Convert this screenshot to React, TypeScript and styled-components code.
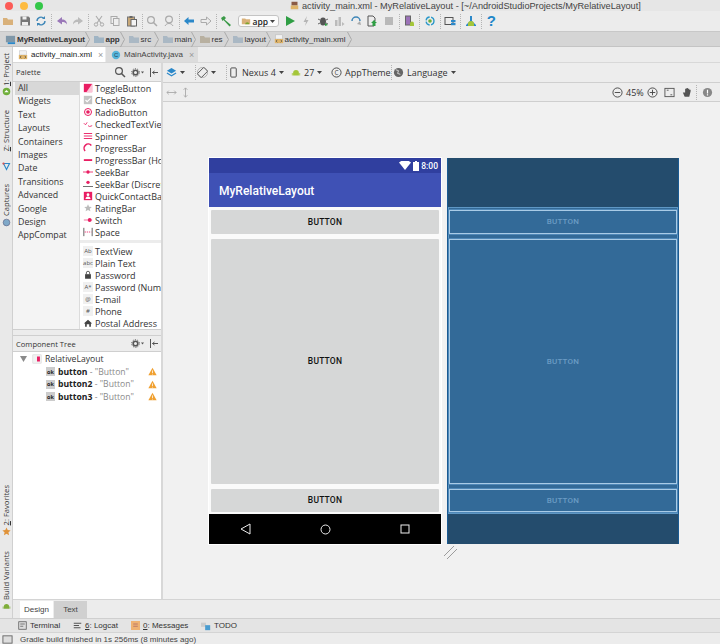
import React from "react";
import styled, { createGlobalStyle } from "styled-components";

const Global = createGlobalStyle`
  html, body { margin: 0; padding: 0; background: #ececec; }
  * { box-sizing: border-box; }
`;

const Root = styled.div`
  width: 720px; height: 644px; overflow: hidden; display: flex; flex-direction: column;
  background: #ececec; color: #222; font-family: "Open Sans", "Liberation Sans", sans-serif; font-size: 9px;
`;
const TitleBar = styled.div`
  height: 11px; flex: none; display: flex; align-items: center; position: relative;
  background: #e6e6e6; padding-left: 5px; gap: 7px;
`;
const Light = styled.span<{ $c: string }>`
  width: 8px; height: 8px; border-radius: 50%; background: ${p => p.$c}; flex: none;
`;
const TitleText = styled.div`
  margin-left: 240px; display: flex; align-items: center; gap: 3px; color: #444; white-space: nowrap;
  font-family: "Liberation Sans", sans-serif; font-size: 9.2px;
`;
const Toolbar = styled.div`
  height: 21px; flex: none; display: flex; align-items: center; background: #ececec; border-bottom: 1px solid #c8c8c8;
`;
const Slot = styled.span`
  width: 16.5px; height: 16px; flex: none; display: flex; align-items: center; justify-content: center;
`;
const Sep = styled.span`
  width: 1px; height: 15px; flex: none; margin: 0 1.5px; border-left: 1px dotted #b4b4b4;
`;
const AppBox = styled.div`
  width: 41px; height: 12px; flex: none; margin: 0 3px; border: 1px solid #c4c4c4; border-radius: 3px; background: #fcfcfc;
  display: flex; align-items: center; gap: 2px; padding-left: 2px; font-size: 8.5px; font-weight: 600;
`;
const Crumbs = styled.div`
  height: 15px; flex: none; display: flex; align-items: center; background: #d5d5d5; padding-left: 5px; border-bottom: 1px solid #c4c4c4;
  color: #333; font-family: "Liberation Sans", sans-serif; font-size: 8px;
`;
const Crumb = styled.span<{ $w: number; $bold?: boolean }>`
  width: ${p => p.$w}px; flex: none; display: flex; align-items: center; gap: 1px; white-space: nowrap;
  font-weight: ${p => (p.$bold ? 700 : 400)};
`;
const Middle = styled.div`
  flex: 1; min-height: 0; display: flex;
`;
const Side = styled.div`
  width: 13px; flex: none; display: flex; flex-direction: column; justify-content: space-between; align-items: center;
  background: #e9e9e9; padding: 6px 0 7px; border-right: 1px solid #d0d0d0;
`;
const SideGroup = styled.div`
  display: flex; flex-direction: column; align-items: center;
`;
const SideLabel = styled.span<{ $top?: number }>`
  writing-mode: vertical-rl; transform: rotate(180deg); font-size: 7.6px; color: #333; white-space: nowrap;
  line-height: 12px; margin-top: ${p => p.$top ?? 0}px;
  u { text-decoration: underline; }
`;
const SideIcon = styled.span<{ $top?: number }>`
  margin-top: ${p => p.$top ?? 1}px; height: 10px; display: flex; align-items: center; justify-content: center;
`;
const MainCol = styled.div`
  flex: 1; min-width: 0; display: flex; flex-direction: column;
`;
const Tabs = styled.div`
  height: 16px; flex: none; display: flex; background: #ececec; border-bottom: 1px solid #d8d8d8;
`;
const FileTab = styled.div<{ $active?: boolean }>`
  width: 92px; margin-right: 1px; flex: none; display: flex; align-items: center; gap: 3px; padding-left: 5px;
  font-family: "Liberation Sans", sans-serif; font-size: 8px; white-space: nowrap;
  background: ${p => (p.$active ? "#fff" : "#dcdcdc")}; color: ${p => (p.$active ? "#222" : "#444")};
`;
const TabClose = styled.span`
  color: #999; font-size: 9px; margin-left: 3px;
`;
const Work = styled.div`
  flex: 1; min-height: 0; display: flex;
`;
const LeftPanel = styled.div`
  width: 150px; flex: none; display: flex; flex-direction: column; background: #fff; border-right: 2px solid #d8d8d8;
`;
const PanelHead = styled.div<{ $h: number }>`
  height: ${p => p.$h}px; flex: none; display: flex; align-items: center; justify-content: space-between; padding: 0 3px;
  background: #ededed; border-bottom: 1px solid #cfcfcf; font-size: 7.6px; color: #333;
`;
const HeadIcons = styled.div`
  display: flex; align-items: center; gap: 5px;
`;
const PaletteBody = styled.div`
  height: 247px; flex: none; display: flex;
`;
const Cats = styled.div`
  width: 67px; flex: none; padding: 0 0 0 2px; background: #f4f4f4; border-right: 1px solid #dcdcdc;
`;
const Cat = styled.div<{ $active?: boolean }>`
  height: 13.4px; line-height: 13.4px; padding-left: 3px; font-size: 8.8px; color: #333;
  background: ${p => (p.$active ? "#d8d8d8" : "transparent")};
`;
const Items = styled.div`
  flex: 1; min-width: 0; overflow: hidden;
`;
const Item = styled.div`
  height: 12px; display: flex; align-items: center; gap: 2px; padding-left: 3px; font-size: 9px; white-space: nowrap; color: #333;
`;
const ItemDivider = styled.div`
  height: 3px; margin: 2px 0 2px; background: #ececec;
`;
const Splitter = styled.div`
  height: 7px; flex: none; background: #ececec; border-top: 1px solid #cfcfcf; border-bottom: 1px solid #cfcfcf;
`;
const Tree = styled.div`
  flex: 1; padding-top: 1px; background: #fff;
`;
const TreeRow = styled.div<{ $indent: number }>`
  height: 12.5px; display: flex; align-items: center; gap: 3px; padding-left: ${p => p.$indent}px; padding-right: 4px; font-size: 8.6px; white-space: nowrap; color: #333;
`;
const BoldName = styled.b`
  color: #222; font-weight: 700;
`;
const Muted = styled.span`
  color: #8a8a8a;
`;
const Warn = styled.span`
  margin-left: auto; display: flex;
`;
const Editor = styled.div`
  flex: 1; min-width: 0; display: flex; flex-direction: column; background: #f1f1f1;
`;
const EdRow = styled.div<{ $h: number }>`
  height: ${p => p.$h}px; flex: none; display: flex; align-items: center; padding-left: 3px; background: #ededed; border-bottom: 1px solid #cfcfcf;
  font-size: 9px; color: #333;
`;
const EdGroup = styled.div<{ $w: number }>`
  width: ${p => p.$w}px; flex: none; display: flex; align-items: center; gap: 3px; white-space: nowrap;
`;
const Spacer = styled.span`
  flex: 1;
`;
const Nudge = styled.span`
  margin-left: 3px; display: flex;
`;
const Canvas = styled.div`
  flex: 1; min-height: 0; position: relative; display: flex; align-items: flex-start; gap: 6px; padding: 56px 0 0 46px;
`;
const Phone = styled.div`
  width: 232px; height: 386px; flex: none; display: flex; flex-direction: column; background: #fafafa;
  box-shadow: 0 0 0 1px #fff;
`;
const StatusBarP = styled.div`
  height: 15px; flex: none; background: #303f9f; color: #fff; display: flex; align-items: center; justify-content: flex-end; gap: 2px; padding-right: 3px;
  font: 500 8.5px Roboto, sans-serif;
`;
const AppBar = styled.div`
  height: 34px; flex: none; background: #3f51b5; color: #fff; display: flex; align-items: center; padding: 1px 0 0 10px;
  font: 500 12px Roboto, sans-serif;
`;
const PhoneBody = styled.div`
  flex: 1; display: flex; flex-direction: column; padding: 3px 2px 2px; gap: 5px;
`;
const PBtn = styled.div<{ $grow?: boolean }>`
  height: ${p => (p.$grow ? "auto" : "23.5px")}; flex: ${p => (p.$grow ? 1 : "none")}; background: #d6d7d7; border-radius: 1px;
  display: flex; align-items: center; justify-content: center; color: #111; font: 500 8.5px Roboto, sans-serif; letter-spacing: .2px;
`;
const NavBar = styled.div`
  height: 30px; flex: none; background: #000; display: flex; align-items: center; justify-content: space-between; padding: 0 31px;
`;
const Blue = styled.div`
  width: 232px; height: 386px; flex: none; display: flex; flex-direction: column; background: #244c6d;
  border-left: 1px solid #1a5a92; border-right: 1px solid #1a5a92;
`;
const BlueTop = styled.div<{ $h: number }>`
  height: ${p => p.$h}px; flex: none;
`;
const BlueBody = styled.div`
  flex: 1; background: #336a98; box-shadow: inset 0 0 0 1px #5f97c4; display: flex; flex-direction: column; padding: 3px 1px 2px; gap: 5px; min-height: 0;
`;
const BBtn = styled.div<{ $grow?: boolean }>`
  height: ${p => (p.$grow ? "auto" : "23.5px")}; flex: ${p => (p.$grow ? 1 : "none")};
  border: 1px solid #a9cbe6; box-shadow: 0 0 0 1px #4f88b8; display: flex; align-items: center; justify-content: center; color: #6b9cc4;
  font: 500 8px Roboto, sans-serif; letter-spacing: .2px;
`;
const Handle = styled.span`
  position: absolute; left: 281px; top: 444px; display: flex;
`;
const DesignTabs = styled.div`
  height: 19px; flex: none; display: flex; align-items: flex-end; padding-left: 7px; background: #ececec; border-top: 1px solid #d4d4d4; gap: 1px;
`;
const DTab = styled.div<{ $active?: boolean }>`
  width: 33px; height: 17px; display: flex; align-items: center; justify-content: center; font-family: "Liberation Sans", sans-serif; font-size: 8px; color: #444;
  background: ${p => (p.$active ? "#fff" : "#d0d0d0")};
`;
const BottomTools = styled.div`
  height: 14px; flex: none; display: flex; align-items: center; padding-left: 18px; background: #e4e4e4; border-top: 1px solid #cfcfcf;
  font-family: "Liberation Sans", sans-serif; font-size: 8px; color: #333;
`;
const Tool = styled.span<{ $w: number }>`
  width: ${p => p.$w}px; flex: none; display: flex; align-items: center; gap: 3px; white-space: nowrap;
`;
const StatusLine = styled.div`
  height: 12px; flex: none; display: flex; align-items: center; gap: 7px; padding: 1px 0 0 2px; background: #ececec; border-top: 1px solid #d4d4d4;
  font-family: "Liberation Sans", sans-serif; font-size: 8px; color: #444; white-space: nowrap;
`;
const HelpMark = styled.span`
  color: #1e87c9; font: 700 15px/14px "Liberation Sans", sans-serif;
`;
const BoxTag = styled.span`
  width: 10px; height: 10px; flex: none; background: #f0f0f0; color: #555; font-size: 6px; display: flex; align-items: center; justify-content: center;
`;
const OkTag = styled.span`
  width: 9px; height: 9px; flex: none; background: #ccc; color: #222; font-size: 5.5px; font-weight: 700; display: flex; align-items: center; justify-content: center;
`;
const Svg = styled.svg<{ $mr?: number }>`
  flex: none; display: block; margin-right: ${p => p.$mr ?? 0}px;
`;

type SP = { s?: number; children: React.ReactNode };
const G = ({ s = 12, children }: SP) => (
  <Svg width={s} height={s} viewBox="0 0 12 12">{children}</Svg>
);

const Folder = ({ c = "#d9b17a" }: { c?: string }) => <G><path d="M1 3h4l1 1.500h5V10H1z" fill={c} /></G>;
const Save = () => <G><path d="M1.500 1.500h8l1.500 1.500v7.500h-9.500z" fill="#777" /><rect x="3.500" y="1.500" width="4" height="3" fill="#eee" /><rect x="3" y="7" width="6" height="3.500" fill="#eee" /></G>;
const Sync = ({ c = "#3f87b8" }: { c?: string }) => <G><path d="M2 6a4 4 0 0 1 7-2.500M10 6a4 4 0 0 1-7 2.500" fill="none" stroke={c} strokeWidth="1.400" /><path d="M10 1v3H7zM2 11V8h3z" fill={c} /></G>;
const Undo = ({ c }: { c: string }) => <G><path d="M1 6l5-4v2.500c3 0 5 1.500 5 5-1-2-3-2.500-5-2.500V9.500z" fill={c} /></G>;
const Redo = ({ c }: { c: string }) => <G><path d="M11 6L6 2v2.500c-3 0-5 1.500-5 5 1-2 3-2.500 5-2.500V9.500z" fill={c} /></G>;
const Cut = () => <G><path d="M3 1l5 7M9 1L4 8" stroke="#aaa" strokeWidth="1.100" fill="none" /><circle cx="3" cy="9.500" r="1.700" fill="none" stroke="#aaa" /><circle cx="9" cy="9.500" r="1.700" fill="none" stroke="#aaa" /></G>;
const Copy = () => <G><rect x="2" y="1.500" width="6" height="7" fill="#eee" stroke="#aaa" /><rect x="4.500" y="3.500" width="5.500" height="7" fill="#eee" stroke="#aaa" /></G>;
const Paste = () => <G><rect x="1.500" y="2" width="7" height="9" fill="#c8a878" stroke="#777" /><rect x="5" y="4.500" width="5.500" height="6.500" fill="#f4f4f4" stroke="#666" /><rect x="3.500" y="1" width="3" height="2" fill="#666" /></G>;
const Search = ({ c = "#aaa" }: { c?: string }) => <G><circle cx="5" cy="5" r="3.400" fill="none" stroke={c} strokeWidth="1.200" /><path d="M7.500 7.500L11 11" stroke={c} strokeWidth="1.500" /></G>;
const Replace = () => <G><circle cx="6" cy="4.500" r="3.400" fill="none" stroke="#aaa" strokeWidth="1.200" /><path d="M2 11c1-2 2.500-2.500 4-2.500S9 9 10 11" fill="none" stroke="#aaa" /></G>;
const ArrL = ({ c }: { c: string }) => <G><path d="M1 6l4.500-4v2.500H11v3H5.500V10z" fill={c} /></G>;
const ArrR = ({ c }: { c: string }) => <G><path d="M11 6L6.500 2v2.500H1v3h5.500V10z" fill="none" stroke={c} /></G>;
const Hammer = () => <G><path d="M1 3l3-2 2 2-1.500 1.500L11 10l-1.500 1.500L3.500 5 2.500 6z" fill="#3b9a48" /></G>;
const Droid = ({ c = "#a4c639" }: { c?: string }) => <><path d="M2.500 6a3.500 3.500 0 0 1 7 0v3h-7z" fill={c} /><rect x="1" y="6" width="1" height="3" fill={c} /><rect x="10" y="6" width="1" height="3" fill={c} /></>;
const Run = () => <G><path d="M2 1l9 5-9 5z" fill="#2f9e44" /></G>;
const Bolt = () => <G><path d="M7 1L3.500 7H6l-1 4 3.500-6H6z" fill="#b5b5b5" /></G>;
const Bug = () => <G><ellipse cx="6" cy="6.500" rx="3" ry="4" fill="#555" /><path d="M1 4l2 1M11 4L9 5M1 9l2-1M11 9L9 8" stroke="#666" /><path d="M8 8l3 2-3 1z" fill="#2f9e44" /></G>;
const Prof = () => <G><rect x="2" y="5" width="2.500" height="6" fill="#bbb" /><rect x="5.500" y="2" width="2.500" height="9" fill="#bbb" /><path d="M9 7l2.500 2-2.500 2z" fill="#bbb" /></G>;
const Apply = () => <G><path d="M2 6a4 4 0 0 1 8 0" fill="none" stroke="#3f87b8" strokeWidth="1.500" /><path d="M7 9l3-3 1 4z" fill="#aaa" /></G>;
const Attach = () => <G><path d="M2 1h5l2 2v3H8v5H2z" fill="none" stroke="#555" /><path d="M8 5l3 3H9.500v3h-3V8H5z" fill="#2f9e44" /></G>;
const Stop = () => <G><rect x="2" y="2" width="8" height="8" fill="#b9b9b9" /></G>;
const Avd = () => <G><rect x="2.500" y="1" width="5" height="9" fill="#9b72b8" stroke="#666" /><path d="M7 8.500a2 2 0 0 1 4 0V11H7z" fill="#a4c639" /></G>;
const SyncG = () => <G><circle cx="6" cy="6" r="4" fill="none" stroke="#2b98c9" strokeWidth="1.300" strokeDasharray="5 1.500" /><circle cx="6" cy="6" r="1.800" fill="#6fae3a" /></G>;
const Struct = () => <G><rect x="1" y="2.500" width="8" height="7" fill="none" stroke="#555" /><rect x="7" y="5" width="4.500" height="2.200" fill="#2b88c9" /><rect x="7" y="8" width="4.500" height="2.200" fill="#2b88c9" /></G>;
const Sdk = () => <G><path d="M5 1h2v5l4 4v1H1v-1l4-4z" fill="#2b88c9" /><path d="M3 9a3 3 0 0 1 6 0v2H3z" fill="#a4c639" /></G>;
const Caret = ({ c = "#444" }: { c?: string }) => <Svg width="5" height="3" viewBox="0 0 5 3"><path d="M0 0h5L2.500 3z" fill={c} /></Svg>;
const Chevron = () => <Svg $mr={3} width="5" height="15" viewBox="0 0 5 15"><path d="M.5 0l4 7.500-4 7.500" fill="none" stroke="#aaa" /></Svg>;
const XmlIcon = () => <G s={10}><rect x="2" y="1" width="8" height="5" fill="#f2f2f2" stroke="#bbb" strokeWidth=".6" /><rect x="1" y="6" width="10" height="5" fill="#e0b468" /><path d="M4 7l-1.500 1.500L4 10M8 7l1.500 1.500L8 10" stroke="#444" fill="none" strokeWidth=".8" /></G>;
const Gear = () => <Svg width="13" height="9" viewBox="0 0 13 9"><circle cx="4.500" cy="4.500" r="2.300" fill="none" stroke="#555" strokeWidth="1.600" /><circle cx="4.500" cy="4.500" r="3.800" fill="none" stroke="#555" strokeWidth="1" strokeDasharray="1.200 1.200" /><path d="M10 3.500h3L11.500 5.500z" fill="#555" /></Svg>;
const Pin = () => <Svg width="9" height="9" viewBox="0 0 9 9"><path d="M1.500 0v9M3.500 4.500H9M3.500 4.500L5.500 3M3.500 4.500L5.500 6" stroke="#555" fill="none" /></Svg>;

const pal: Record<string, React.ReactNode> = {
  toggle: <><rect x="1" y="1" width="10" height="10" fill="#e91e63" /><path d="M11 1v10H4z" fill="#fbc4d6" /></>,
  check: <><rect x="1" y="1" width="10" height="10" fill="#c4c4c4" /><path d="M3 6l2 2 4-4" stroke="#fff" fill="none" strokeWidth="1.300" /></>,
  radio: <><circle cx="6" cy="6" r="4.200" fill="none" stroke="#e91e63" strokeWidth="1.200" /><circle cx="6" cy="6" r="2.200" fill="#e91e63" /></>,
  checked: <path d="M1 5l2 2 2-3M6 8l2 1 3-1" stroke="#e91e63" fill="none" />,
  spinner: <path d="M1 3h10M1 6h10M1 9h10" stroke="#e91e63" strokeWidth="1.100" />,
  progress: <path d="M2.500 9.500A4.800 4.800 0 0 1 10 3" stroke="#e91e63" strokeWidth="1.800" fill="none" />,
  bar: <rect x="1" y="5" width="10" height="2.200" fill="#e91e63" />,
  seek: <><path d="M0 6h12" stroke="#e91e63" /><circle cx="6" cy="6" r="2" fill="#e91e63" /></>,
  seekd: <><path d="M0 9h12" stroke="#555" /><circle cx="6" cy="4" r="2" fill="#e91e63" /></>,
  quick: <><rect x="1" y="1" width="10" height="10" fill="#e91e63" /><circle cx="6" cy="4.500" r="1.700" fill="#fff" /><path d="M3 9.500a3 3 0 0 1 6 0z" fill="#fff" /></>,
  rating: <path d="M6 1.500l1.300 3 3.200.300-2.400 2 .8 3.200L6 8.300 3.100 10l.8-3.200-2.400-2 3.200-.3z" fill="#bbb" />,
  sw: <><rect x="1" y="5" width="10" height="2" fill="#f7a9c3" /><circle cx="8" cy="6" r="2.300" fill="#e91e63" /></>,
  space: <><path d="M1 1v10M11 1v10" stroke="#444" /><path d="M2 6h8" stroke="#e91e63" strokeDasharray="1.500 1" /></>,
  lock: <><rect x="2.500" y="5" width="7" height="5.500" fill="#444" /><path d="M4 5V3.500a2 2 0 0 1 4 0V5" stroke="#444" fill="none" /></>,
  home: <path d="M6 2l5 4.500H9.500V10.500h-2V7.500h-3v3h-2V6.500H1z" fill="#444" />,
};
const P = ({ k }: { k: string }) => <G s={10}>{pal[k]}</G>;
const WarnIcon = () => <G s={9}><path d="M6 1l5.500 10H.5z" fill="#f0a030" /><path d="M6 4.500v3.500M6 9v1" stroke="#fff" /></G>;
const Circ = ({ plus }: { plus?: boolean }) => <G s={11}><circle cx="6" cy="6" r="5" fill="none" stroke="#444" /><path d={plus ? "M3 6h6M6 3v6" : "M3 6h6"} stroke="#444" /></G>;

const palette1: [string, string][] = [["toggle", "ToggleButton"], ["check", "CheckBox"], ["radio", "RadioButton"], ["checked", "CheckedTextView"], ["spinner", "Spinner"], ["progress", "ProgressBar"], ["bar", "ProgressBar (Horizontal)"], ["seek", "SeekBar"], ["seekd", "SeekBar (Discrete)"], ["quick", "QuickContactBadge"], ["rating", "RatingBar"], ["sw", "Switch"], ["space", "Space"]];
const palette2: [React.ReactNode, string][] = [[<BoxTag>Ab</BoxTag>, "TextView"], [<BoxTag>abc</BoxTag>, "Plain Text"], [<P k="lock" />, "Password"], [<BoxTag>A*</BoxTag>, "Password (Numeric)"], [<BoxTag>@</BoxTag>, "E-mail"], [<BoxTag>#</BoxTag>, "Phone"], [<P k="home" />, "Postal Address"]];
const cats = ["All", "Widgets", "Text", "Layouts", "Containers", "Images", "Date", "Transitions", "Advanced", "Google", "Design", "AppCompat"];
const crumbs: [string, number, string][] = [["app", 27, "#9fb4c4"], ["src", 26, "#aab8c4"], ["main", 29, "#aab8c4"], ["res", 25, "#b8b0a0"], ["layout", 34, "#aab8c4"]];

export default function App() {
  return (
    <Root>
      <Global />
      <TitleBar>
        <Light $c="#fc5b57" /><Light $c="#fdbb40" /><Light $c="#34c748" />
        <TitleText><G s={9}><rect x="2" y="1" width="8" height="5" fill="#8a5a44" /><rect x="1" y="6" width="10" height="5" fill="#e0b468" /></G>activity_main.xml - MyRelativeLayout - [~/AndroidStudioProjects/MyRelativeLayout]</TitleText>
      </TitleBar>
      <Toolbar>
        <Slot><Folder /></Slot><Slot><Save /></Slot><Slot><Sync /></Slot><Sep />
        <Slot><Undo c="#9a78b8" /></Slot><Slot><Redo c="#bbb" /></Slot><Sep />
        <Slot><Cut /></Slot><Slot><Copy /></Slot><Slot><Paste /></Slot><Sep />
        <Slot><Search /></Slot><Slot><Replace /></Slot><Sep />
        <Slot><ArrL c="#2b88c9" /></Slot><Slot><ArrR c="#aaa" /></Slot><Sep />
        <Slot><Hammer /></Slot>
        <AppBox><G s={10}><path d="M1 3h4l1 1h5v6H1z" fill="#d9b17a" /><path d="M5 10a2.500 2.500 0 0 1 5 0z" fill="#7fa52f" /></G>app<Caret /></AppBox>
        <Slot><Run /></Slot><Slot><Bolt /></Slot><Slot><Bug /></Slot><Slot><Prof /></Slot><Slot><Apply /></Slot><Slot><Attach /></Slot><Slot><Stop /></Slot><Sep />
        <Slot><Avd /></Slot><Sep /><Slot><SyncG /></Slot><Sep /><Slot><Struct /></Slot><Sep /><Slot><Sdk /></Slot><Sep /><Slot><HelpMark>?</HelpMark></Slot>
      </Toolbar>
      <Crumbs>
        <Crumb $w={79.5} $bold><G s={11}><rect x="1" y="2" width="10" height="7" fill="#7f97a8" /><rect x="3" y="9" width="8" height="2" fill="#2b88c9" /></G>MyRelativeLayout</Crumb><Chevron />
        {crumbs.map(([t, w, c]) => <React.Fragment key={t}><Crumb $w={w} $bold={t === "app"}><Folder c={c} />{t}</Crumb><Chevron /></React.Fragment>)}
        <Crumb $w={73}><XmlIcon />activity_main.xml</Crumb><Chevron />
      </Crumbs>
      <Middle>
        <Side>
          <SideGroup>
            <SideLabel><u>1</u>: Project</SideLabel>
            <SideIcon $top={0}><G s={9}><circle cx="6" cy="6" r="5" fill="#6fae3a" /><path d="M3 7l3-3 3 3z" fill="#fff" /></G></SideIcon>
            <SideLabel $top={14}><u>Z</u>: Structure</SideLabel>
            <SideIcon $top={10}><G s={9}><path d="M2 2l4 8 4-8z" fill="none" stroke="#2b88c9" strokeWidth="1.500" /><circle cx="2" cy="2" r="1.500" fill="#d9534f" /></G></SideIcon>
            <SideLabel $top={13}>Captures</SideLabel>
            <SideIcon><G s={9}><circle cx="6" cy="6" r="4.500" fill="#7fa8c8" stroke="#557" strokeWidth=".7" /></G></SideIcon>
          </SideGroup>
          <SideGroup>
            <SideLabel><u>2</u>: Favorites</SideLabel>
            <SideIcon><G s={9}><path d="M6 .5l1.600 3.600 3.900.4-2.900 2.600.8 3.900L6 9l-3.400 2 .8-3.900L.5 4.500l3.900-.4z" fill="#e0933a" /></G></SideIcon>
            <SideLabel $top={15}>Build Variants</SideLabel>
            <SideIcon><G s={9}><Droid c="#7fae3a" /></G></SideIcon>
          </SideGroup>
        </Side>
        <MainCol>
          <Tabs>
            <FileTab $active><XmlIcon />activity_main.xml<TabClose>×</TabClose></FileTab>
            <FileTab><G s={10}><circle cx="6" cy="6" r="5" fill="#55b3d9" /><text x="6" y="8.500" fontSize="7" textAnchor="middle" fill="#245">C</text></G>MainActivity.java<TabClose>×</TabClose></FileTab>
          </Tabs>
          <Work>
            <LeftPanel>
              <PanelHead $h={19}>Palette<HeadIcons><Search c="#555" /><Gear /><Pin /></HeadIcons></PanelHead>
              <PaletteBody>
                <Cats>{cats.map((c, i) => <Cat key={c} $active={i === 0}>{c}</Cat>)}</Cats>
                <Items>
                  {palette1.map(([k, t]) => <Item key={t}><P k={k} />{t}</Item>)}
                  <ItemDivider />
                  {palette2.map(([ic, t]) => <Item key={t}>{ic}{t}</Item>)}
                </Items>
              </PaletteBody>
              <Splitter />
              <PanelHead $h={16}>Component Tree<HeadIcons><Gear /><Pin /></HeadIcons></PanelHead>
              <Tree>
                <TreeRow $indent={7}>
                  <Svg $mr={2} width="7" height="6" viewBox="0 0 7 6"><path d="M0 0h7L3.500 6z" fill="#8a8a8a" /></Svg>
                  <G s={10}><rect x="1" y="1" width="10" height="10" fill="#f2f2f2" stroke="#ccc" strokeWidth=".6" /><rect x="6" y="3" width="3.500" height="6" fill="#e91e63" /></G>RelativeLayout
                </TreeRow>
                {["button", "button2", "button3"].map(n => (
                  <TreeRow key={n} $indent={33}><OkTag>ok</OkTag><span><BoldName>{n}</BoldName> <Muted>- "Button"</Muted></span><Warn><WarnIcon /></Warn></TreeRow>
                ))}
              </Tree>
            </LeftPanel>
            <Editor>
              <EdRow $h={20}>
                <EdGroup $w={27}><G s={11}><path d="M6 1l5 3-5 3-5-3z" fill="#2b88c9" /><path d="M1 6.500l5 3 5-3" stroke="#2b88c9" fill="none" strokeWidth="1.300" /></G><Caret /></EdGroup><Sep />
                <EdGroup $w={27}><G s={11}><rect x="3" y="1" width="6" height="10" transform="rotate(45 6 6)" fill="none" stroke="#555" /><circle cx="6" cy="6" r="5.500" fill="none" stroke="#888" strokeWidth=".6" /></G><Caret /></EdGroup><Sep />
                <EdGroup $w={63}><G s={11}><rect x="3" y="1" width="6" height="10" rx="1" fill="none" stroke="#444" /></G>Nexus 4<Caret /></EdGroup>
                <EdGroup $w={40}><G s={10}><Droid /></G>27<Caret /></EdGroup>
                <EdGroup $w={58}><G s={11}><circle cx="6" cy="6" r="5" fill="none" stroke="#444" /><text x="6" y="8.500" fontSize="7" textAnchor="middle" fill="#444">C</text></G>AppTheme</EdGroup><Sep />
                <EdGroup $w={70}><G s={11}><circle cx="6" cy="6" r="5" fill="#666" /><path d="M3 3l3 1-1 3 3 1" stroke="#ddd" fill="none" /></G>Language<Caret /></EdGroup>
              </EdRow>
              <EdRow $h={19}>
                <EdGroup $w={32}><G s={11}><path d="M1 6h10M3 4L1 6l2 2M9 4l2 2-2 2" stroke="#aaa" fill="none" /></G><G s={11}><path d="M6 1v10M4 3l2-2 2 2M4 9l2 2 2-2" stroke="#aaa" fill="none" /></G></EdGroup>
                <Spacer />
                <EdGroup $w={108}>
                  <Circ /><span>45%</span><Circ plus />
                  <Nudge><G s={11}><rect x="1" y="1.500" width="10" height="9" fill="none" stroke="#555" /><path d="M3 3.500h2M7 8.500h2" stroke="#555" /></G></Nudge>
                  <Nudge><G s={11}><path d="M2 6l2 4.500h5l1.500-6V3H9V2H7.500V1H6v1H4.500v4z" fill="#555" /></G></Nudge>
                  <Sep />
                  <G s={11}><circle cx="6" cy="6" r="5" fill="#888" /><path d="M6 3v4M6 8v1.200" stroke="#fff" strokeWidth="1.300" /></G>
                </EdGroup>
              </EdRow>
              <Canvas>
                <Phone>
                  <StatusBarP>
                    <svg width="12" height="9" viewBox="0 0 12 9"><path d="M0 1.500a9 9 0 0 1 12 0L6 9z" fill="#fff" /></svg>
                    <svg width="6" height="10" viewBox="0 0 6 10"><path d="M0 1h2V0h2v1h2v9H0z" fill="#fff" /></svg>
                    <span>8:00</span>
                  </StatusBarP>
                  <AppBar>MyRelativeLayout</AppBar>
                  <PhoneBody>
                    <PBtn>BUTTON</PBtn>
                    <PBtn $grow>BUTTON</PBtn>
                    <PBtn>BUTTON</PBtn>
                  </PhoneBody>
                  <NavBar>
                    <svg width="11" height="12" viewBox="0 0 11 12"><path d="M1 6l9-5v10z" fill="none" stroke="#eee" /></svg>
                    <svg width="11" height="11" viewBox="0 0 11 11"><circle cx="5.500" cy="5.500" r="4.500" fill="none" stroke="#eee" /></svg>
                    <svg width="10" height="10" viewBox="0 0 10 10"><rect x="1" y="1" width="8" height="8" fill="none" stroke="#eee" /></svg>
                  </NavBar>
                </Phone>
                <Blue>
                  <BlueTop $h={49} />
                  <BlueBody>
                    <BBtn>BUTTON</BBtn>
                    <BBtn $grow>BUTTON</BBtn>
                    <BBtn>BUTTON</BBtn>
                  </BlueBody>
                  <BlueTop $h={30} />
                </Blue>
                <Handle><svg width="13" height="13" viewBox="0 0 13 13"><path d="M0 10L10 0M3 13L13 3" stroke="#777" strokeWidth=".7" /></svg></Handle>
              </Canvas>
            </Editor>
          </Work>
          <DesignTabs><DTab $active>Design</DTab><DTab>Text</DTab></DesignTabs>
        </MainCol>
      </Middle>
      <BottomTools>
        <Tool $w={55}><G s={9}><rect x="1" y="1" width="10" height="10" fill="#ddd" stroke="#555" /><path d="M3 4h6M3 7h4" stroke="#555" /></G>Terminal</Tool>
        <Tool $w={58}><G s={9}><path d="M1 3h10M1 6h7M1 9h9" stroke="#444" strokeWidth="1.200" /></G><span><u>6</u>: Logcat</span></Tool>
        <Tool $w={70}><G s={9}><rect x="0" y="0" width="12" height="12" fill="#efb272" /><path d="M3 4h6M3 7h6" stroke="#a66" /></G><span><u>0</u>: Messages</span></Tool>
        <Tool $w={40}><G s={10}><rect x="0" y="2" width="6" height="5" fill="#ccc" /><rect x="5" y="5" width="6" height="6" fill="#4a9cd0" /></G>TODO</Tool>
      </BottomTools>
      <StatusLine>
        <G s={11}><rect x="1" y="2" width="10" height="8" fill="#ddd" stroke="#666" /></G>
        Gradle build finished in 1s 256ms (8 minutes ago)
      </StatusLine>
    </Root>
  );
}
